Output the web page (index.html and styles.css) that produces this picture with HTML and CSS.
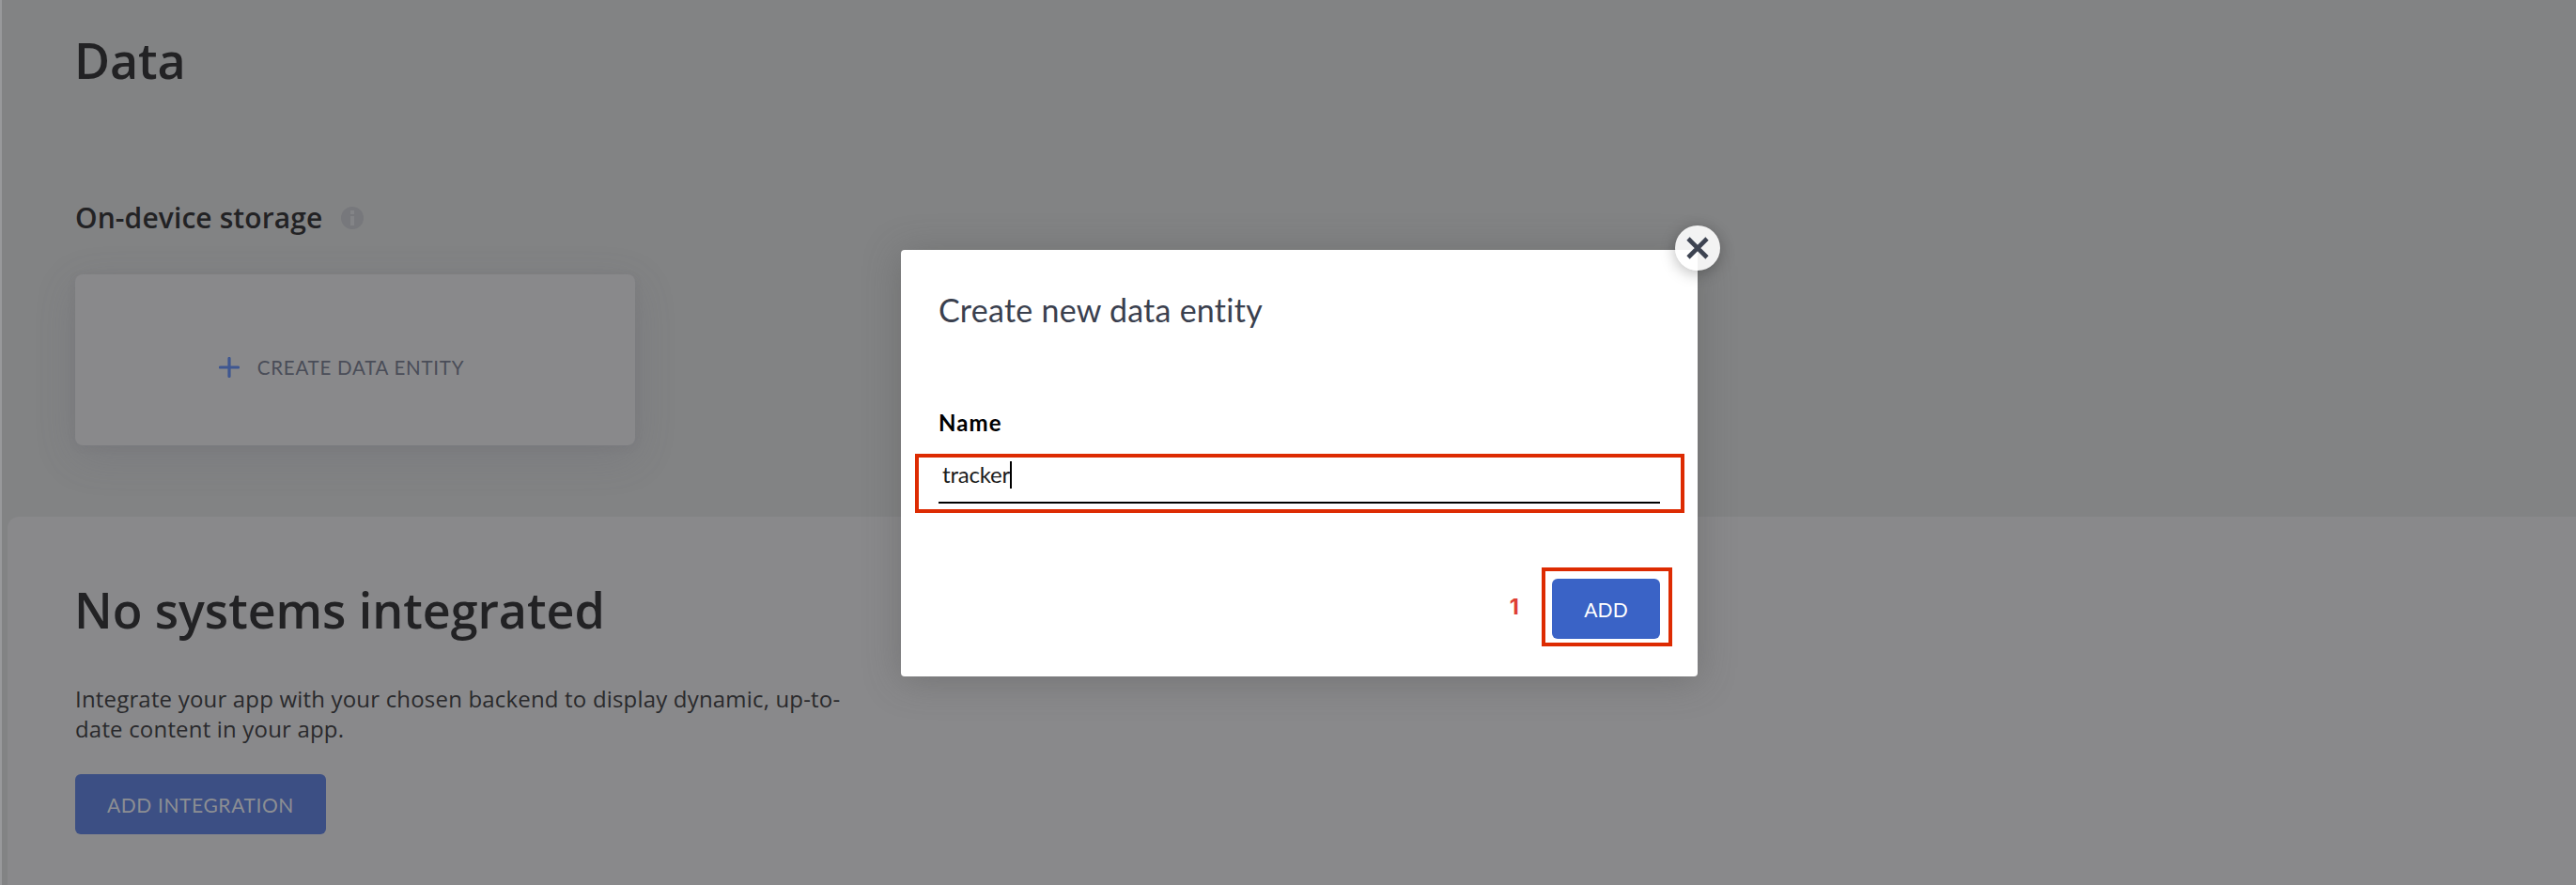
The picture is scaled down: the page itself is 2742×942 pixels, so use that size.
FILE: index.html
```html
<!DOCTYPE html>
<html lang="en">
<head>
<meta charset="utf-8">
<title>Data</title>
<link rel="stylesheet" href="styles.css">
</head>
<body>
<main class="page">
  <section class="storage">
    <h1 class="page-title">Data</h1>
    <div class="storage-head">
      <h3 class="storage-title">On-device storage</h3>
      <svg class="info" viewBox="0 0 24 24"><circle cx="12" cy="12" r="12" fill="#77787c"/><path d="M10 4h4v4h-4zM10 10h4v10h-4z" fill="#838487"/></svg>
    </div>
    <div class="card">
      <svg class="plus" viewBox="0 0 22 22"><path d="M11 1.5v19M1.5 11h19" stroke="#3f5791" stroke-width="3.2" stroke-linecap="round"/></svg>
      <span class="card-label">CREATE DATA ENTITY</span>
    </div>
  </section>
  <section class="systems">
    <h2 class="systems-title">No systems integrated</h2>
    <p class="systems-text">Integrate your app with your chosen backend to display dynamic, up-to-<br>date content in your app.</p>
    <button class="integrate">ADD INTEGRATION</button>
  </section>
</main>
<div class="overlay">
  <div class="modal">
    <button class="close" aria-label="Close"><svg viewBox="0 0 24 24"><path d="M2 2l20 20M22 2L2 22" stroke="#3d4351" stroke-width="4.6"/></svg></button>
    <h2 class="modal-title">Create new data entity</h2>
    <label class="field-label">Name</label>
    <div class="field-mark">
      <div class="field"><span class="field-value">tracker</span><i class="caret"></i></div>
    </div>
    <div class="actions">
      <span class="step">1</span>
      <div class="add-mark"><button class="add">ADD</button></div>
    </div>
  </div>
</div>
</body>
</html>
```
FILE: styles.css
```css
* { box-sizing: border-box; }
body { margin: 0; background: #828384; font-family: Lato, "Open Sans", sans-serif; color: #222224; overflow: hidden; }
h1, h2, h3, p { margin: 0; }
button { border: 0; font-family: inherit; padding: 0; }
svg { display: block; }
.page { height: 942px; border-left: 2px solid #98999b; display: flex; flex-direction: column; }
.storage { height: 550px; padding: 32px 0 0 77px; }
.page-title, .storage-title, .systems-title, .systems-text { font-family: "Open Sans", Lato, sans-serif; }
.page-title { font-size: 52px; line-height: 64px; font-weight: 600; letter-spacing: -.1px; }
.storage-head { display: flex; align-items: center; gap: 20px; margin: 118px 0 0 1px; height: 36px; }
.storage-title { font-size: 30px; line-height: 36px; font-weight: 600; letter-spacing: .1px; }
.info { width: 24px; height: 24px; }
.card { width: 596px; height: 182px; margin: 42px 0 0 1px; padding: 16px 29px 0 0; border-radius: 8px; background: #89898b; box-shadow: 0 12px 44px rgba(92, 90, 104, .2), 0 2px 8px rgba(90, 88, 110, .12); display: flex; justify-content: center; align-items: center; gap: 19px; }
.plus { width: 22px; height: 22px; }
.card-label { font-size: 20.5px; line-height: 26px; letter-spacing: .75px; color: #4a4d58; }
.systems { flex: 1; margin-left: 6px; padding: 67px 0 0 72px; border-radius: 12px 0 0 0; background: #89898b; }
.systems-title { margin-left: -1px; font-size: 52px; line-height: 64px; font-weight: 600; letter-spacing: -.05px; }
.systems-text { margin-top: 47px; font-size: 24px; line-height: 32px; letter-spacing: .18px; white-space: nowrap; color: #29292c; }
.integrate { display: block; margin-top: 32px; width: 267px; height: 64px; border-radius: 6px; background: #3c4f84; color: #8c8e93; font-size: 21px; letter-spacing: .6px; }
.overlay { position: absolute; inset: 0; display: flex; justify-content: center; align-items: flex-start; padding: 266px 0 0 24px; }
.modal { position: relative; width: 848px; height: 454px; padding: 44px 14px 0 15px; border-radius: 4px; background: #fff; box-shadow: 0 4px 38px rgba(80, 80, 80, .38); }
.close { position: absolute; top: -26px; right: -24px; width: 48px; height: 48px; border-radius: 50%; background: rgba(255, 255, 255, .9); box-shadow: 0 3px 16px rgba(0, 0, 0, .28); display: grid; place-items: center; }
.close svg { width: 24px; height: 24px; }
.modal-title { margin-left: 25px; font-size: 34px; line-height: 40px; font-weight: 400; letter-spacing: .25px; color: #3a404e; }
.field-label { display: block; margin: 85px 0 0 25px; font-size: 24px; line-height: 30px; font-weight: 700; letter-spacing: 1.1px; color: #000; }
.field-mark { margin-top: 18px; width: 819px; height: 63px; border: 4px solid #dd2b02; padding: 3px 22px 0 21px; }
.field { height: 46px; border-bottom: 2px solid #000; padding-left: 4px; display: flex; }
.field-value { font-size: 24px; line-height: 30px; letter-spacing: -.2px; color: #1c1c1c; }
.caret { width: 2px; height: 29px; margin-top: 1px; background: #000; }
.actions { display: flex; justify-content: flex-end; gap: 24px; margin: 58px 13px 0 0; }
.step { font-family: Inter, sans-serif; font-weight: 700; font-size: 23.5px; line-height: 28px; margin-top: 28px; color: #de3f34; }
.add-mark { width: 139px; height: 84px; border: 4px solid #dd2b02; padding: 8px 0 0 7px; }
.add { display: block; width: 115px; height: 64px; border-radius: 6px; background: #3a63c6; color: #fff; font-size: 21px; letter-spacing: .16px; }
```
